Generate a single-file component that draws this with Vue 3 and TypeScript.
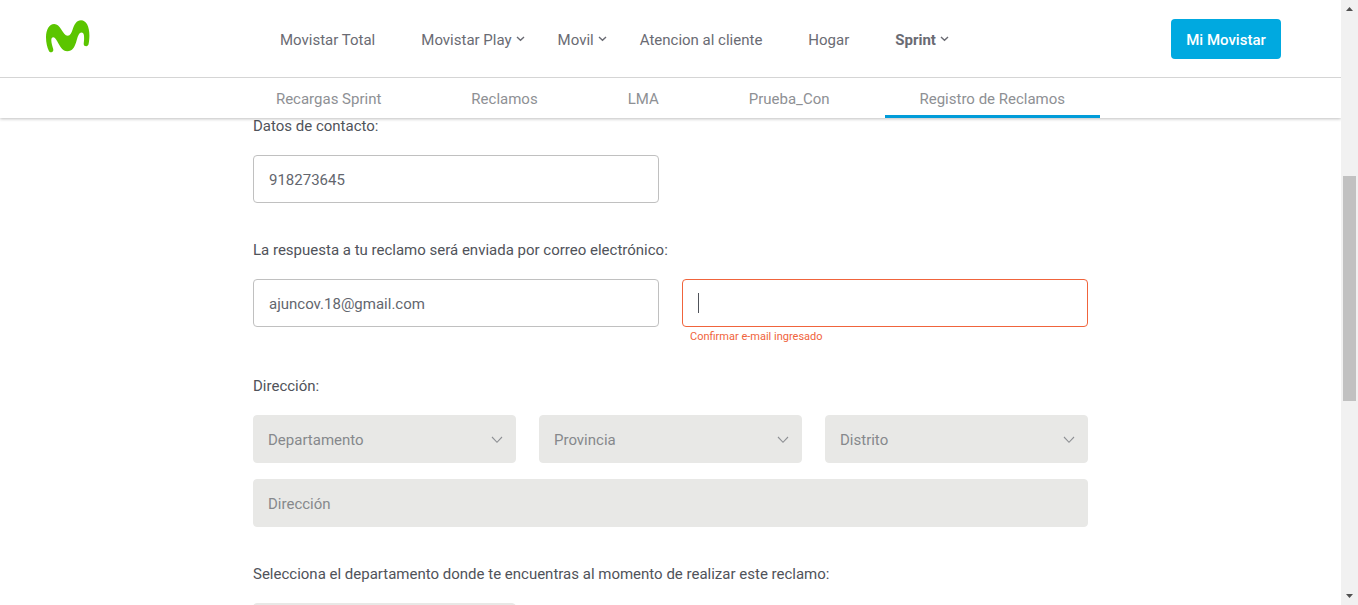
<script setup lang="ts">
import { ref } from 'vue'

interface MenuItem {
  label: string
  menu?: boolean
  current?: boolean
}

const mainMenu: MenuItem[] = [
  { label: 'Movistar Total' },
  { label: 'Movistar Play', menu: true },
  { label: 'Movil', menu: true },
  { label: 'Atencion al cliente' },
  { label: 'Hogar' },
  { label: 'Sprint', menu: true, current: true },
]

const tabs: MenuItem[] = [
  { label: 'Recargas Sprint' },
  { label: 'Reclamos' },
  { label: 'LMA' },
  { label: 'Prueba_Con' },
  { label: 'Registro de Reclamos', current: true },
]

const places = ['Departamento', 'Provincia', 'Distrito']

const phone = ref('918273645')
const email = ref('ajuncov.18@gmail.com')
const emailConfirm = ref('')
</script>

<template>
  <div class="window">
    <div class="page">
      <header class="header">
        <div class="top">
          <a class="logo" href="#" aria-label="Movistar">
            <svg width="44" height="33" viewBox="0 0 44 33" aria-hidden="true">
              <path
                fill="#5bc500"
                d="M8.200 4C3.200 4 0 9.500 0 17.300C0 22.500 1.200 27.800 2.800 30.800C3.500 32.100 4.500 32.600 5.600 32.200C7.100 31.700 7.600 30.600 7.200 29C6.400 25.900 5.300 23 5.300 20.300C5.300 18.300 6 17.200 7.200 17.200C8.600 17.200 9.600 18.600 11.200 21.300C14.200 26.500 16.400 31.300 21.300 31.300C26.400 31.300 28.600 27 30.200 22C31.600 17.300 32.700 12.600 35.500 12.600C38 12.600 38.200 15.600 38.100 19.200C38 21.400 37.700 23 37.700 24C37.700 25.500 38.800 26.200 40.200 26.200C41.500 26.200 42.300 25.500 42.600 24.100C43.100 21.600 43.400 18.600 43.400 15.500C43.400 6.600 40.400 0.200 35 0.200C30.500 0.200 28.400 4.300 26.700 9.300C25.600 12.600 24.300 15.800 21.800 15.800C19 15.800 17.400 12.800 15.300 9.600C13.200 6.400 11.300 4 8.200 4Z"
              />
            </svg>
          </a>
          <nav class="menu" aria-label="Principal">
            <a
              v-for="item in mainMenu"
              :key="item.label"
              href="#"
              class="menu-link"
              :class="{ current: item.current }"
            >
              {{ item.label }}
              <svg v-if="item.menu" class="menu-arrow" width="9" height="6" viewBox="0 0 9 6" aria-hidden="true">
                <path d="M1 1L4.500 4.300L8 1" fill="none" stroke="currentColor" stroke-width="1.400" />
              </svg>
            </a>
          </nav>
          <button type="button" class="account">Mi Movistar</button>
        </div>
        <nav class="tabs" aria-label="Sprint">
          <a
            v-for="tab in tabs"
            :key="tab.label"
            href="#"
            class="tab"
            :class="{ active: tab.current }"
          >{{ tab.label }}</a>
        </nav>
      </header>

      <main class="form">
        <section class="group">
          <label class="title" for="phone">Datos de contacto:</label>
          <div class="row two">
            <input id="phone" v-model="phone" class="box" type="tel" />
          </div>
        </section>

        <section class="group with-error">
          <label class="title" for="email">La respuesta a tu reclamo será enviada por correo electrónico:</label>
          <div class="row two">
            <input id="email" v-model="email" class="box" type="email" />
            <div class="confirm">
              <input
                id="email-confirm"
                v-model="emailConfirm"
                class="box invalid"
                type="email"
                aria-describedby="email-error"
                aria-label="Confirmar e-mail"
                aria-invalid="true"
              />
              <span v-if="!emailConfirm" class="caret"></span>
              <p id="email-error" class="error">Confirmar e-mail ingresado</p>
            </div>
          </div>
        </section>

        <section class="group">
          <label class="title" for="address">Dirección:</label>
          <div class="row three">
            <div v-for="place in places" :key="place" class="choice">
              <select class="box filled" :aria-label="place">
                <option>{{ place }}</option>
              </select>
              <svg class="choice-arrow" width="12" height="8" viewBox="0 0 12 8" aria-hidden="true">
                <path d="M1 1L6 6.300L11 1" fill="none" stroke="currentColor" stroke-width="1.100" />
              </svg>
            </div>
          </div>
          <input id="address" class="box filled address" type="text" placeholder="Dirección" />
        </section>

        <section class="group">
          <label class="title" for="region">Selecciona el departamento donde te encuentras al momento de realizar este reclamo:</label>
          <div class="row three">
            <select id="region" class="box filled">
              <option>Departamento</option>
            </select>
          </div>
        </section>
      </main>
    </div>

    <div class="scrollbar" aria-hidden="true">
      <svg class="step" width="17" height="17" viewBox="0 0 17 17"><path d="M5 11L8.500 7L12 11Z" fill="#505050" /></svg>
      <div class="track"><div class="thumb"></div></div>
      <svg class="step" width="17" height="17" viewBox="0 0 17 17"><path d="M5 6L8.500 10L12 6Z" fill="#505050" /></svg>
    </div>
  </div>
</template>

<style>
body {
  margin: 0;
  background: #fff;
}
</style>

<style scoped>
.window {
  display: grid;
  grid-template-columns: minmax(0, 1fr) 17px;
  height: 100vh;
  overflow: hidden;
  font-family: Roboto, "Noto Sans", sans-serif;
  font-size: 15px;
  color: #50535a;
}

.window *,
.window *::before {
  box-sizing: border-box;
}

.page {
  overflow: hidden;
}

a {
  color: inherit;
  text-decoration: none;
}

.header {
  position: relative;
  background: #fff;
  box-shadow: 0 1px 3px rgba(0, 0, 0, 0.25);
}

.top {
  display: flex;
  align-items: center;
  height: 78px;
  padding: 0 60px 0 46px;
  border-bottom: 1px solid #d5d5d5;
}

.logo {
  display: flex;
  width: 234px;
  padding-bottom: 4px;
}

.menu {
  display: flex;
  gap: 46px;
  flex: 1;
  padding-top: 2px;
  color: #6a6b73;
}

.menu-link {
  position: relative;
  white-space: nowrap;
  line-height: 20px;
}

.menu-link.current {
  font-weight: 700;
}

.menu-arrow {
  position: absolute;
  left: 100%;
  top: 6px;
  margin-left: 4px;
}

.account {
  height: 40px;
  width: 110px;
  padding: 2px 0 0;
  border: 0;
  border-radius: 4px;
  background: #00a9e0;
  color: #fff;
  font: inherit;
  font-weight: 500;
}

.tabs {
  display: flex;
  justify-content: center;
  gap: 20px;
  height: 40px;
}

.tab {
  padding: 0 35px;
  line-height: 42px;
  color: #8e9094;
  white-space: nowrap;
}

.tab.active {
  border-bottom: 3px solid #019cd9;
}

.form {
  max-width: 835px;
  margin: 0 auto;
}

.group {
  margin-bottom: 39px;
}

.group.with-error {
  margin-bottom: 31px;
}

.title {
  display: block;
  margin-bottom: 21px;
  line-height: 16px;
}

.row {
  display: grid;
  column-gap: 23px;
}

.two {
  grid-template-columns: repeat(2, minmax(0, 1fr));
}

.three {
  grid-template-columns: repeat(3, minmax(0, 1fr));
}

.box {
  display: block;
  width: 100%;
  height: 48px;
  padding: 2px 15px 0;
  border: 1px solid #c0c0c0;
  border-radius: 4px;
  background: #fff;
  color: #63666e;
  font: inherit;
  appearance: none;
  outline: none;
}

.box.invalid {
  border-color: #f0643c;
}

.box.filled {
  padding: 2px 14px 0;
  border-color: #e8e8e6;
  background: #e8e8e6;
  color: #86888c;
}

.box::placeholder {
  color: #86888c;
  opacity: 1;
}

.confirm,
.choice {
  position: relative;
}

.caret {
  position: absolute;
  left: 16px;
  top: 14px;
  width: 1px;
  height: 20px;
  background: #50535a;
}

.error {
  margin: 0;
  padding-left: 8px;
  color: #f0643c;
  font-size: 11px;
  line-height: 20px;
}

.choice-arrow {
  position: absolute;
  right: 13px;
  top: 21px;
  color: #8e9094;
  pointer-events: none;
}

.address {
  margin-top: 16px;
}

.scrollbar {
  display: flex;
  flex-direction: column;
  background: #f1f1f1;
}

.track {
  display: grid;
  flex: 1;
  grid-template-rows: 159fr 225fr 187fr;
  padding: 0 2px;
}

.thumb {
  grid-row: 2;
  background: #c1c1c1;
}
</style>
